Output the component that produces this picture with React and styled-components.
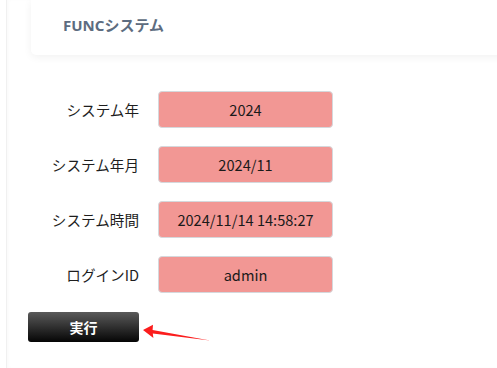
import React from 'react';
import styled, { createGlobalStyle } from 'styled-components';

const GlobalStyle = createGlobalStyle`
  html, body {
    margin: 0;
    padding: 0;
    background: #ffffff;
    overflow: hidden;
    font-family: "Noto Sans", "Noto Sans CJK JP", sans-serif;
  }
`;

const fields = [
  { label: 'システム年', value: '2024' },
  { label: 'システム年月', value: '2024/11' },
  { label: 'システム時間', value: '2024/11/14 14:58:27' },
  { label: 'ログインID', value: 'admin' },
];

export default function App() {
  return (
    <>
      <GlobalStyle />
      <Main>
        <Card>
          <Title>FUNCシステム</Title>
        </Card>
        <Form>
          {fields.map(f => (
            <Row key={f.label}>
              <Label>{f.label}</Label>
              <Field>{f.value}</Field>
            </Row>
          ))}
        </Form>
        <Actions>
          <RunButton type="button">実行</RunButton>
          <Arrow width="72" height="24" viewBox="0 0 72 24">
            <polygon
              points="1,9 11,3.8 10.6,9 68,19.6 10.8,12.6 11.4,17"
              fill="#fb1d1d"
            />
          </Arrow>
        </Actions>
      </Main>
    </>
  );
}

const Main = styled.div`
  margin-left: 6px;
  min-height: 368px;
  border-left: 1px solid #f0f0f0;
  box-shadow: inset 2px 0 3px rgba(0, 0, 0, 0.02);
  box-sizing: border-box;
`;

const Card = styled.div`
  margin-left: 24px;
  margin-right: -12px;
  height: 55px;
  box-sizing: border-box;
  padding: 15px 32px 0;
  background: #ffffff;
  border-radius: 0 0 0 5px;
  box-shadow: 0 2px 8px rgba(0, 0, 0, 0.06);
`;

const Title = styled.h1`
  margin: 0;
  font-size: 15px;
  line-height: 20px;
  font-weight: 700;
  color: #5d6c80;
`;

const Form = styled.div`
  margin-top: 36px;
  display: flex;
  flex-direction: column;
  gap: 18px;
`;

const Row = styled.div`
  display: grid;
  grid-template-columns: 132px 175px;
  column-gap: 19px;
  align-items: center;
`;

const Label = styled.span`
  text-align: right;
  font-family: "Noto Sans CJK JP", sans-serif;
  font-size: 14.6px;
  color: #1e1e1e;
`;

const Field = styled.div`
  height: 37px;
  box-sizing: border-box;
  display: flex;
  align-items: center;
  justify-content: center;
  background: #f29794;
  border: 1px solid #d5d8dc;
  border-radius: 4px;
  font-family: "Noto Sans CJK JP", sans-serif;
  font-size: 14.6px;
  color: #1a1a1a;
`;

const Actions = styled.div`
  margin-top: 19px;
  margin-left: 21px;
  display: flex;
  align-items: flex-start;
  gap: 3px;
`;

const RunButton = styled.button`
  width: 111px;
  height: 30px;
  border: none;
  border-radius: 3px;
  background: linear-gradient(#5a5a5a, #050505);
  color: #ffffff;
  font-family: "Noto Sans CJK JP", sans-serif;
  font-weight: 700;
  font-size: 14px;
  padding: 0;
`;

const Arrow = styled.svg`
  display: block;
  margin-top: 9px;
`;
